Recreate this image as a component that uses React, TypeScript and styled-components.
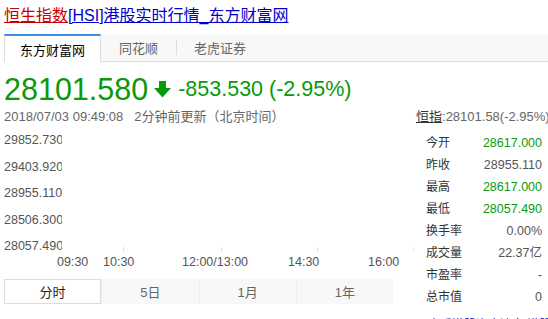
import React from 'react';
import styled, { createGlobalStyle } from 'styled-components';

const GlobalStyle = createGlobalStyle`
  html, body {
    margin: 0;
    padding: 0;
    overflow: hidden;
    background: #fff;
  }
  body {
    font-family: "Liberation Sans", Arial, "Noto Sans CJK SC", sans-serif;
    color: #333;
  }
`;

const green = '#0a990a';

const Page = styled.div`
  width: 548px;
  height: 319px;
  box-sizing: border-box;
  padding: 4px 0 0 4px;
  overflow: hidden;
`;

const Title = styled.a`
  display: block;
  font-size: 16px;
  line-height: 24px;
  color: #0000cc;
  text-decoration: underline;
  white-space: nowrap;
`;

const TitleRed = styled.span`
  color: #cc0000;
  text-decoration: underline;
`;

// Source tabs
const TabBar = styled.div`
  display: flex;
  margin-top: 6px;
  height: 27px;
  background: #f8f8f8;
  border-bottom: 1px solid #dddddd;
`;

const Tab = styled.div<{ $active?: boolean; $sep?: boolean }>`
  position: relative;
  box-sizing: border-box;
  display: flex;
  align-items: center;
  justify-content: center;
  font-size: 13px;
  color: ${p => (p.$active ? '#000' : '#666')};
  background: ${p => (p.$active ? '#fff' : 'transparent')};
  ${p =>
    p.$active
      ? `
    width: 97px;
    height: 28px;
    border-top: 2px solid #3d8fe6;
    border-left: 1px solid #dddddd;
    border-right: 1px solid #dddddd;
  `
      : `
    padding: 0 18px;
    height: 27px;
  `}
  ${p =>
    p.$sep &&
    `
    &::before {
      content: '';
      position: absolute;
      left: 0;
      top: 6px;
      height: 15px;
      border-left: 1px solid #dddddd;
    }
  `}
`;

// Price header
const PriceRow = styled.div`
  display: flex;
  align-items: center;
  margin-top: 10px;
  height: 34px;
  color: ${green};
  white-space: nowrap;
`;

const BigPrice = styled.span`
  font-size: 30.5px;
  line-height: 34px;
`;

const Arrow = styled.svg`
  margin: 1px 7px 0 6px;
`;

const Change = styled.span`
  font-size: 21.5px;
  line-height: 28px;
`;

const Main = styled.div`
  display: flex;
`;

const LeftCol = styled.div`
  width: 410px;
  flex-shrink: 0;
`;

const DateLine = styled.div`
  font-size: 13px;
  line-height: 22px;
  color: #666;
  white-space: nowrap;
`;

const Updated = styled.span`
  margin-left: 11px;
`;

// Chart
const ChartBody = styled.div`
  display: flex;
  height: 125px;
`;

const YAxis = styled.div`
  width: 58px;
  flex-shrink: 0;
  overflow: hidden;
  padding-top: 5px;
  box-sizing: border-box;
  display: flex;
  flex-direction: column;
  gap: 12.5px;
`;

const YLabel = styled.div`
  font-size: 12.5px;
  line-height: 14px;
  color: #555;
  white-space: nowrap;
`;

const XAxisLabels = styled.svg`
  display: block;
`;

const BottomTabs = styled.div`
  display: grid;
  grid-template-columns: repeat(4, 1fr);
  width: 389px;
  height: 25px;
  margin-top: 8px;
  background: #f8f8f8;
`;

const RangeTab = styled.div<{ $active?: boolean }>`
  display: flex;
  align-items: center;
  justify-content: center;
  box-sizing: border-box;
  font-size: 13px;
  color: ${p => (p.$active ? '#222' : '#666')};
  background: ${p => (p.$active ? '#fff' : 'transparent')};
  border: ${p => (p.$active ? '1px solid #dddddd' : 'none')};
  & + & {
    border-left: 1px solid #eeeeee;
  }
`;

// Right panel
const RightPanel = styled.div`
  width: 134px;
  flex-shrink: 0;
  padding-left: 2px;
  box-sizing: border-box;
`;

const IndexLine = styled.div`
  font-size: 13px;
  line-height: 22px;
  color: #666;
  white-space: nowrap;
`;

const IndexLink = styled.span`
  color: #333;
  text-decoration: underline;
`;

const Stats = styled.div`
  margin-top: 4px;
  padding: 0 6px 0 10px;
`;

const StatRow = styled.div`
  display: flex;
  justify-content: space-between;
  height: 22px;
  line-height: 22px;
  font-size: 12px;
`;

const StatLabel = styled.span`
  color: #333;
`;

const StatValue = styled.span<{ $green?: boolean }>`
  font-size: 12.5px;
  color: ${p => (p.$green ? green : '#555')};
`;

const MoreLink = styled.div`
  margin-top: 6px;
  padding-left: 12px;
  font-size: 12px;
  line-height: 22px;
  color: #0000cc;
  white-space: nowrap;
`;

const yLabels = ['29852.730', '29403.920', '28955.110', '28506.300', '28057.490'];
const ticks = [61, 159, 255, 351.5];
const xLabels = [
  { x: 53, t: '09:30' },
  { x: 99, t: '10:30' },
  { x: 178, t: '12:00/13:00' },
  { x: 284, t: '14:30' },
  { x: 364, t: '16:00' },
];

const stats = [
  { label: '今开', value: '28617.000', green: true },
  { label: '昨收', value: '28955.110' },
  { label: '最高', value: '28617.000', green: true },
  { label: '最低', value: '28057.490', green: true },
  { label: '换手率', value: '0.00%' },
  { label: '成交量', value: '22.37亿' },
  { label: '市盈率', value: '-' },
  { label: '总市值', value: '0' },
];

export default function App() {
  return (
    <>
      <GlobalStyle />
      <Page>
        <Title>
          <TitleRed>恒生指数</TitleRed>[HSI]港股实时行情_东方财富网
        </Title>

        <TabBar>
          <Tab $active>东方财富网</Tab>
          <Tab>同花顺</Tab>
          <Tab $sep>老虎证券</Tab>
        </TabBar>

        <PriceRow>
          <BigPrice>28101.580</BigPrice>
          <Arrow width="17" height="17" viewBox="0 0 17 17">
            <rect x="5" y="0" width="7" height="8" fill={green} />
            <polygon points="0,7 17,7 8.5,16.5" fill={green} />
          </Arrow>
          <Change>-853.530 (-2.95%)</Change>
        </PriceRow>

        <Main>
          <LeftCol>
            <DateLine>
              2018/07/03 09:49:08<Updated>2分钟前更新（北京时间）</Updated>
            </DateLine>

            <ChartBody>
              <YAxis>
                {yLabels.map(l => (
                  <YLabel key={l}>{l}</YLabel>
                ))}
              </YAxis>
              <svg width="352" height="125">
                {ticks.map(x => (
                  <line key={x} x1={x + 0.5} x2={x + 0.5} y1="119" y2="124" stroke="#dddddd" strokeWidth="1" />
                ))}
              </svg>
            </ChartBody>
            <XAxisLabels width="410" height="18">
              {xLabels.map(l => (
                <text
                  key={l.t}
                  x={l.x}
                  y="13"
                  fontSize="12.5"
                  fill="#555"
                  fontFamily='"Liberation Sans", Arial, sans-serif'
                >
                  {l.t}
                </text>
              ))}
            </XAxisLabels>

            <BottomTabs>
              <RangeTab $active>分时</RangeTab>
              <RangeTab>5日</RangeTab>
              <RangeTab>1月</RangeTab>
              <RangeTab>1年</RangeTab>
            </BottomTabs>
          </LeftCol>

          <RightPanel>
            <IndexLine>
              <IndexLink>恒指</IndexLink>:28101.58(-2.95%)
            </IndexLine>
            <Stats>
              {stats.map(s => (
                <StatRow key={s.label}>
                  <StatLabel>{s.label}</StatLabel>
                  <StatValue $green={s.green}>{s.value}</StatValue>
                </StatRow>
              ))}
            </Stats>
            <MoreLink>查看港股资金流向 港股通</MoreLink>
          </RightPanel>
        </Main>
      </Page>
    </>
  );
}
